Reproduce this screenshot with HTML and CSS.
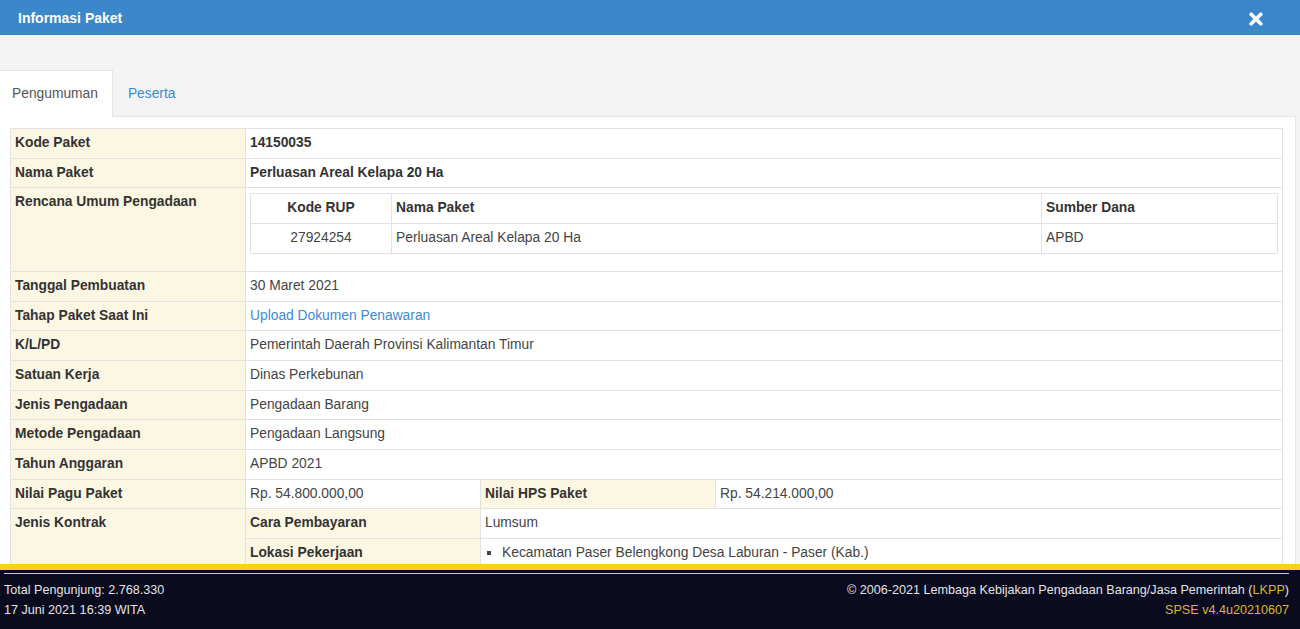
FILE: index.html
```html
<!DOCTYPE html>
<html lang="id">
<head>
<meta charset="utf-8">
<title>Informasi Paket</title>
<link rel="stylesheet" href="styles.css">
</head>
<body>
<div class="app">
  <header class="modal-header">
    <h1 class="modal-title">Informasi Paket</h1>
    <button class="close" aria-label="Tutup">
      <svg width="14" height="14" viewBox="0 0 14 14"><path d="M2.2 2.2 L11.8 11.8 M11.8 2.2 L2.2 11.8" stroke="#fff" stroke-width="3.6" stroke-linecap="round" fill="none"/></svg>
    </button>
  </header>
  <main class="modal-body">
    <ul class="nav-tabs">
      <li class="tab active">Pengumuman</li>
      <li class="tab"><a href="#">Peserta</a></li>
    </ul>
    <div class="tab-panel">
      <table class="info">
        <colgroup><col class="c1"><col class="c2"><col class="c3"><col></colgroup>
        <tbody>
          <tr><th>Kode Paket</th><td colspan="3"><strong>14150035</strong></td></tr>
          <tr><th>Nama Paket</th><td colspan="3"><strong>Perluasan Areal Kelapa 20 Ha</strong></td></tr>
          <tr><th>Rencana Umum Pengadaan</th><td colspan="3">
            <table class="rup">
              <colgroup><col class="r1"><col><col class="r3"></colgroup>
              <thead><tr><th class="center">Kode RUP</th><th>Nama Paket</th><th>Sumber Dana</th></tr></thead>
              <tbody><tr><td class="center">27924254</td><td>Perluasan Areal Kelapa 20 Ha</td><td>APBD</td></tr></tbody>
            </table>
          </td></tr>
          <tr><th>Tanggal Pembuatan</th><td colspan="3">30 Maret 2021</td></tr>
          <tr><th>Tahap Paket Saat Ini</th><td colspan="3"><a href="#">Upload Dokumen Penawaran</a></td></tr>
          <tr><th>K/L/PD</th><td colspan="3">Pemerintah Daerah Provinsi Kalimantan Timur</td></tr>
          <tr><th>Satuan Kerja</th><td colspan="3">Dinas Perkebunan</td></tr>
          <tr><th>Jenis Pengadaan</th><td colspan="3">Pengadaan Barang</td></tr>
          <tr><th>Metode Pengadaan</th><td colspan="3">Pengadaan Langsung</td></tr>
          <tr><th>Tahun Anggaran</th><td colspan="3">APBD 2021</td></tr>
          <tr><th>Nilai Pagu Paket</th><td>Rp. 54.800.000,00</td><th>Nilai HPS Paket</th><td>Rp. 54.214.000,00</td></tr>
          <tr><th rowspan="2">Jenis Kontrak</th><th>Cara Pembayaran</th><td colspan="2">Lumsum</td></tr>
          <tr><th>Lokasi Pekerjaan</th><td colspan="2"><ul class="loc"><li>Kecamatan Paser Belengkong Desa Laburan - Paser (Kab.)</li></ul></td></tr>
        </tbody>
      </table>
    </div>
  </main>
  <footer class="footer">
    <hr class="rule">
    <div class="foot-row">
      <span>Total Pengunjung: 2.768.330</span>
      <span>© 2006-2021 Lembaga Kebijakan Pengadaan Barang/Jasa Pemerintah (<a class="gold" href="#">LKPP</a>)</span>
    </div>
    <div class="foot-row">
      <span>17 Juni 2021 16:39 WITA</span>
      <span class="gold">SPSE v4.4u20210607</span>
    </div>
  </footer>
</div>
</body>
</html>
```
FILE: styles.css
```css
* { box-sizing: border-box; }
html, body { margin: 0; padding: 0; }
body {
  font-family: "Liberation Sans", Arial, Helvetica, sans-serif;
  font-size: 13.8px;
  color: #333;
  background: #f3f3f3;
  overflow: hidden;
}
.app {
  display: flex;
  flex-direction: column;
  height: 629px;
}
.modal-header {
  flex: 0 0 35px;
  background: #3a87c9;
  display: flex;
  align-items: center;
  justify-content: space-between;
  padding: 0 37px 0 18px;
}
.modal-title {
  margin: 0;
  font-size: 14px;
  font-weight: bold;
  color: #fff;
  line-height: 20px;
}
.close {
  border: 0;
  background: none;
  padding: 0;
  width: 14px;
  height: 14px;
  display: flex;
  margin-top: 3px;
}
.modal-body {
  flex: 1 1 auto;
  overflow: hidden;
  padding: 35px 4px 0 0;
  background: #f3f3f3;
}
.nav-tabs {
  list-style: none;
  margin: 0 0 -1px;
  padding: 0;
  display: flex;
  position: relative;
}
.tab {
  padding: 13px 14px 13px 14px;
  line-height: 20px;
  border: 1px solid transparent;
  border-bottom: 0;
}
.tab.active {
  background: #fff;
  border-color: #e3e3e3;
  border-left: 0;
  padding-left: 12px;
  color: #555;
}
.tab a { color: #3d8bd0; text-decoration: none; }
.tab-panel {
  background: #fff;
  border: 1px solid #e6e6e6;
  border-left: 0;
  padding: 11px 12px 10px 10px;
}
table { border-collapse: collapse; border-spacing: 0; }
.info {
  width: 100%;
  table-layout: fixed;
  border: 1px solid #e2e2e2;
}
.c1, .c2, .c3 { width: 235px; }
.info > tbody > tr > th,
.info > tbody > tr > td {
  padding: 5px 4px 5px 4px;
  line-height: 18.7px;
  border: 1px solid #e2e2e2;
  text-align: left;
  vertical-align: top;
}
.info > tbody > tr > th {
  background: #fcf7e3;
  font-weight: bold;
  color: #333;
}
.info td { color: #444; }
.info td strong { color: #333; }
.info a { color: #3d8bd0; text-decoration: none; }
.rup {
  width: 100%;
  table-layout: fixed;
  border: 1px solid #e2e2e2;
  margin: 0 0 12px;
}
.r1 { width: 141px; }
.r3 { width: 236px; }
.rup th, .rup td {
  padding: 5px 4px;
  line-height: 18.7px;
  border: 1px solid #e2e2e2;
  text-align: left;
}
.rup th { font-weight: bold; color: #333; background: #fff; }
.rup td { color: #444; }
.rup .center { text-align: center; }
.loc {
  margin: 0;
  padding-left: 17px;
  list-style: square;
}
.loc li::marker { font-size: 13px; }
.footer {
  flex: 0 0 65px;
  background: #0b0b1f;
  border-top: 6px solid #f8d11a;
  padding: 3px 11px 0 4px;
  color: #e4e4e4;
  font-size: 12.6px;
  overflow: hidden;
}
.rule {
  margin: 0 0 6px;
  border: 0;
  border-top: 1px solid #c9c9cf;
  height: 0;
}
.foot-row {
  display: flex;
  justify-content: space-between;
  line-height: 20px;
}
.gold { color: #dcb52e; text-decoration: none; }
```
